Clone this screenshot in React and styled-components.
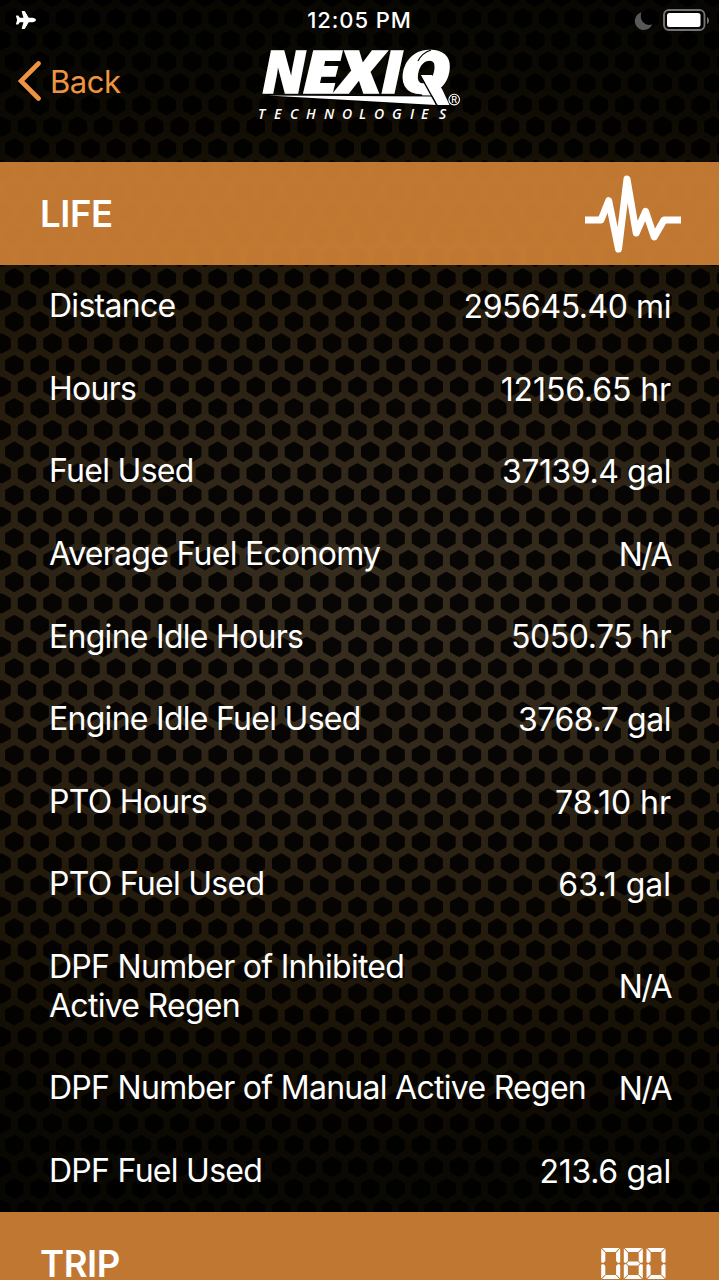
import { FaPlane } from 'react-icons/fa'
import styled, { createGlobalStyle } from 'styled-components'

const GlobalStyle = createGlobalStyle`
  * {
    box-sizing: border-box;
  }

  body {
    margin: 0;
    background: #000;
    color: #fff;
    font-family: Inter, 'Liberation Sans', sans-serif;
  }
`

const Screen = styled.div`
  position: relative;
  isolation: isolate;
  display: flex;
  flex-direction: column;
  width: 719px;
  height: 1280px;
  overflow: hidden;
`

const Backdrop = styled.svg`
  position: absolute;
  inset: 0;
  z-index: -1;
`

const StatusBar = styled.div`
  display: grid;
  grid-template-columns: 1fr auto 1fr;
  align-items: center;
  flex: none;
  height: 40px;
  padding: 0 10px;
`

const PlaneIcon = styled(FaPlane)`
  width: 20px;
  height: 18px;
  margin-left: 6px;
`

const Clock = styled.span`
  font-size: 22px;
  font-weight: 500;
  letter-spacing: 0.9px;
`

const StatusIcons = styled.svg`
  justify-self: end;
`

const Header = styled.header`
  display: grid;
  grid-template-columns: 1fr auto 1fr;
  flex: none;
  height: 122px;
  padding: 0 18px;
`

const BackButton = styled.button`
  display: flex;
  align-items: center;
  gap: 8px;
  height: 82px;
  padding: 0;
  border: 0;
  background: none;
  color: #ee9440;
  font-family: inherit;
  font-size: 31px;
  letter-spacing: -0.5px;
`

const LogoArt = styled.svg`
  overflow: visible;
`

const SectionHeader = styled.div`
  display: flex;
  align-items: center;
  justify-content: space-between;
  flex: none;
  height: 103px;
  padding: 0 38px 0 40px;
  background: rgba(210, 131, 55, 0.91);
`

const SectionTitle = styled.h2`
  margin: 0;
  font-size: 36.5px;
  font-weight: 600;
  letter-spacing: -0.4px;
`

const List = styled.dl`
  flex: none;
  margin: 0;
`

const Row = styled.div`
  display: flex;
  align-items: center;
  justify-content: space-between;
  gap: 24px;
  padding: 22px 48px 22px 49px;
  font-size: 32px;
  line-height: 38.6px;
`

const Label = styled.dt`
  margin: 0.2px 0 -0.2px;
  letter-spacing: -0.72px;
  white-space: pre-line;
`

const Value = styled.dd`
  margin: 1px 0 -1px;
  letter-spacing: ${(props) => props.$tracking || '-0.45px'};
  white-space: nowrap;
`

const LogoLetter = styled.text`
  font-family: 'Open Sans', sans-serif;
  font-size: 59px;
  font-style: italic;
  font-weight: 800;
  stroke: #fff;
  stroke-width: 1.6px;
`

const LogoTagline = styled.text`
  font-family: 'Open Sans', sans-serif;
  font-size: 14px;
  font-style: italic;
  font-weight: 600;
`

const LogoMark = styled.text`
  font-size: 9px;
  font-weight: 500;
`

const rows = [
  { label: 'Distance', value: '295645.40 mi' },
  { label: 'Hours', value: '12156.65 hr', tracking: '-0.1px' },
  { label: 'Fuel Used', value: '37139.4 gal' },
  { label: 'Average Fuel Economy', value: 'N/A', tracking: '-1.6px' },
  { label: 'Engine Idle Hours', value: '5050.75 hr' },
  { label: 'Engine Idle Fuel Used', value: '3768.7 gal' },
  { label: 'PTO Hours', value: '78.10 hr', tracking: '-0.05px' },
  { label: 'PTO Fuel Used', value: '63.1 gal', tracking: '0' },
  {
    label: 'DPF Number of Inhibited\nActive Regen',
    value: 'N/A',
    tracking: '-1.6px',
  },
  {
    label: 'DPF Number of Manual Active Regen',
    value: 'N/A',
    tracking: '-1.6px',
  },
  { label: 'DPF Fuel Used', value: '213.6 gal', tracking: '-0.3px' },
]

const logoLetters = [
  { char: 'N', x: 262.5, width: 43 },
  { char: 'E', x: 303, width: 37 },
  { char: 'X', x: 338, width: 44 },
  { char: 'I', x: 381.5, width: 21 },
  { char: 'Q', x: 400, width: 51 },
]

const HEX = 'm0-8.5 7.6 4.3v8.4l-7.6 4.3-7.6-4.3v-8.4z'

// every other row is shifted by half a cell
const holes = []
for (let row = 0; row < 61; row++) {
  for (let col = 0; col < 30; col++) {
    const x = 14.3 + (col - 1) * 25.42 + (row % 2) * 12.71
    const y = 61.7 + (row - 4) * 21.67
    holes.push(`M${x.toFixed(2)} ${y.toFixed(2)}${HEX}`)
  }
}
const MESH = holes.join('')

function HexBackdrop() {
  return (
    <Backdrop width="719" height="1280">
      <defs>
        <radialGradient
          id="glow"
          gradientUnits="userSpaceOnUse"
          cx="0"
          cy="0"
          r="1"
          gradientTransform="translate(390 610) scale(1000 650)"
        >
          <stop offset="0" stopColor="#372e20" />
          <stop offset="0.25" stopColor="#31281a" />
          <stop offset="0.5" stopColor="#251c0d" />
          <stop offset="0.68" stopColor="#181206" />
          <stop offset="0.82" stopColor="#0d0a04" />
          <stop offset="1" stopColor="#070602" />
        </radialGradient>
      </defs>
      <rect width="719" height="1280" fill="url(#glow)" />
      <path
        d={MESH}
        fill="#000"
        stroke="#000"
        strokeWidth="3.2"
        strokeLinejoin="round"
        opacity="0.86"
      />
    </Backdrop>
  )
}

function Logo() {
  return (
    <LogoArt width="240" height="90" viewBox="240 40 240 90" fill="#fff">
      {logoLetters.map((letter) => (
        <LogoLetter
          key={letter.char}
          x={letter.x}
          y="92.5"
          textLength={letter.width}
          lengthAdjust="spacingAndGlyphs"
        >
          {letter.char}
        </LogoLetter>
      ))}
      <path d="M418 61q4-8 13-11" fill="none" stroke="#000" strokeWidth="1.2" />
      <path
        d="M268 95.4l164.5 1 3.5 8.6z"
        stroke="#000"
        strokeWidth="2"
        paintOrder="stroke"
      />
      <path d="M420.5 75H432l10 14 7.5 16h-12z" />
      <path d="M420 75l17 30.5" stroke="#000" strokeWidth="1.5" />
      <circle
        cx="454.2"
        cy="99.6"
        r="5.3"
        fill="none"
        stroke="#fff"
        strokeWidth="1.1"
      />
      <LogoMark x="451.3" y="102.8">
        R
      </LogoMark>
      <LogoTagline x="258 274 290 306 324 342 359 374 392 410 421 439" y="119">
        TECHNOLOGIES
      </LogoTagline>
    </LogoArt>
  )
}

function PulseIcon() {
  return (
    <svg width="96" height="80" viewBox="585 173.5 96 80">
      <path
        d="M585 219.5h16l7.7-19.3 9.8 48.3 8.5-70 9.2 54 9.4-21.5 8.6 25.5 9.8-17h17"
        fill="none"
        stroke="#fff"
        strokeWidth="7"
        strokeLinejoin="round"
      />
    </svg>
  )
}

function Digit({ x, middle }) {
  return (
    <g transform={`translate(${x} 0)`}>
      <path d="M.8 0h17.4l-3.8 4.1H4.6z" />
      <path d="M0 .5l4.1 4.2v8.2L2.2 15 0 14.2z" />
      <path d="M19 .5l-4.1 4.2v8.2l1.9 2.1 2.2-.8z" />
      {middle && <path d="M4.8 13.5h9.4l1.9 2-1.9 2H4.800l-1.9-2z" />}
      <path d="M0 30.500l4.1-4.2v-8.200L2.2 16l-2.2.8z" />
      <path d="M19 30.500l-4.1-4.2v-8.200L16.800 16l2.200.8z" />
      <path d="M.8 31h17.4l-3.800-4.100H4.600z" />
    </g>
  )
}

function OdometerIcon() {
  return (
    <svg width="96" height="31" viewBox="0 0 96 31" fill="#fff">
      <Digit x={16.2} />
      <Digit x={38.8} middle />
      <Digit x={61.5} />
    </svg>
  )
}

export default function App() {
  return (
    <>
      <GlobalStyle />
      <Screen>
        <HexBackdrop />
        <StatusBar>
          <PlaneIcon />
          <Clock>12:05 PM</Clock>
          <StatusIcons width="75" height="24" viewBox="634 7 75 24">
            <path
              d="M641.5 11.3a9 9 0 1 0 10.7 12.2c-7.5 2.3-13.7-4.9-10.7-12.2z"
              fill="#58585a"
            />
            <rect
              x="664"
              y="9"
              width="40.5"
              height="20"
              rx="5"
              fill="none"
              stroke="#737373"
              strokeWidth="1.9"
            />
            <rect x="667" y="12" width="33.5" height="14" rx="2.5" fill="#fff" />
            <path d="M707 16c2.6 1 2.6 6 0 7z" fill="#737373" />
          </StatusIcons>
        </StatusBar>
        <Header>
          <BackButton>
            <svg width="24" height="40" viewBox="0 0 24 40">
              <path
                d="M20.5 2.5L3 20l17.5 17.5"
                fill="none"
                stroke="currentColor"
                strokeWidth="4.6"
                strokeLinecap="round"
              />
            </svg>
            Back
          </BackButton>
          <Logo />
        </Header>
        <SectionHeader>
          <SectionTitle>LIFE</SectionTitle>
          <PulseIcon />
        </SectionHeader>
        <List>
          {rows.map((row) => (
            <Row key={row.label}>
              <Label>{row.label}</Label>
              <Value $tracking={row.tracking}>{row.value}</Value>
            </Row>
          ))}
        </List>
        <SectionHeader>
          <SectionTitle>TRIP</SectionTitle>
          <OdometerIcon />
        </SectionHeader>
      </Screen>
    </>
  )
}
